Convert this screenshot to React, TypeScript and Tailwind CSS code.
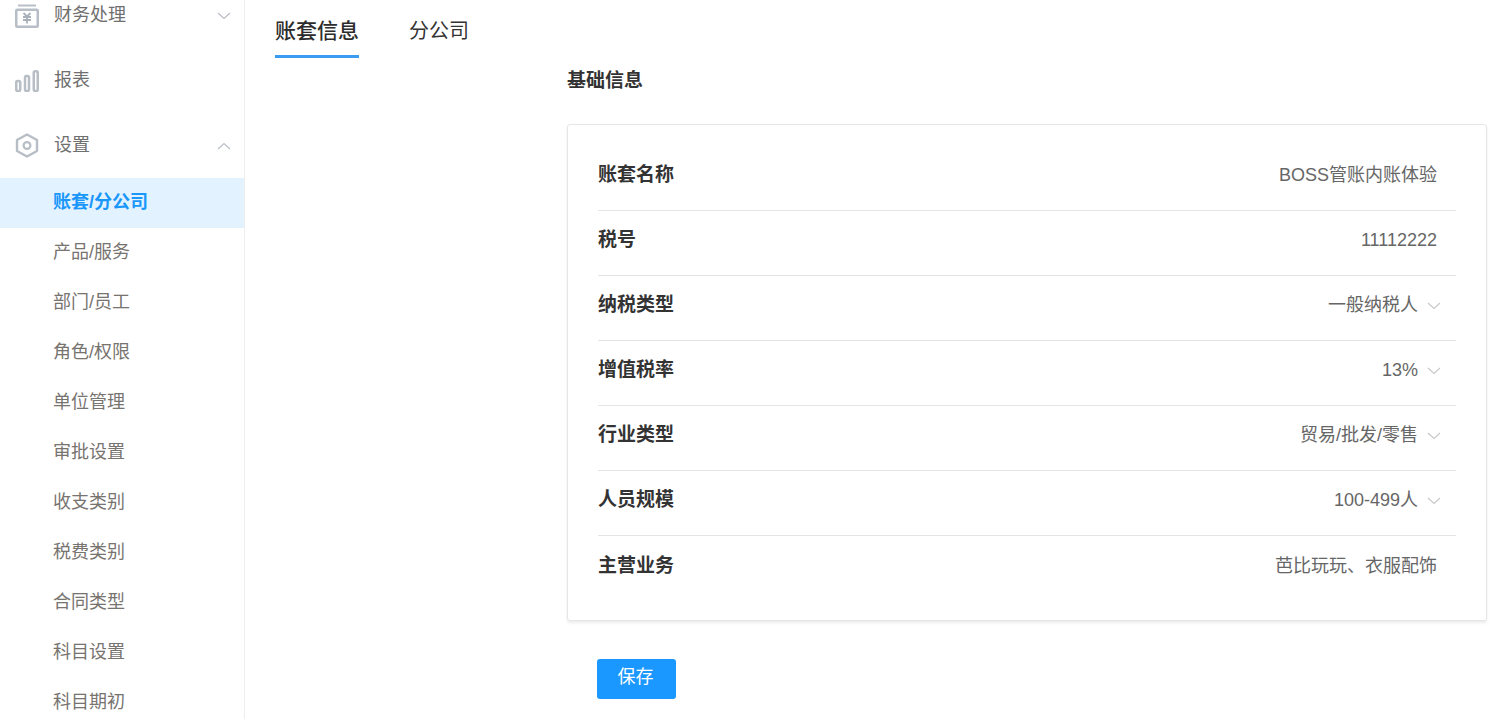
import React from "react";

const font = { fontFamily: '"Liberation Sans", "Noto Sans CJK SC", sans-serif' };

function Chevron({ up = false, className = "" }: { up?: boolean; className?: string }) {
  return (
    <svg width="14" height="8" viewBox="0 0 14 8" fill="none" className={className}>
      <path d={up ? "M1 7L7 1.5L13 7" : "M1 1L7 6.5L13 1"} stroke="currentColor" strokeWidth="1.2" />
    </svg>
  );
}

function FinanceIcon() {
  return (
    <svg width="24" height="24" viewBox="0 0 24 24" fill="none">
      <path d="M3 1.5H21" stroke="#b8bec6" strokeWidth="2" />
      <rect x="1.25" y="5.75" width="21.5" height="17" rx="1" stroke="#b8bec6" strokeWidth="2.5" />
      <path d="M8.5 9L12 12.5L15.5 9M8 13H16M8 16H16M12 12.5V19.5" stroke="#a9b0b9" strokeWidth="1.8" />
    </svg>
  );
}

function ChartIcon() {
  return (
    <svg width="24" height="22" viewBox="0 0 24 22" fill="none">
      <rect x="1.25" y="11" width="4" height="10" rx="1.5" stroke="#b8bec6" strokeWidth="2.5" />
      <rect x="10" y="6" width="4" height="15" rx="1.5" stroke="#b8bec6" strokeWidth="2.5" />
      <rect x="18.75" y="1.25" width="4" height="19.75" rx="1.5" stroke="#b8bec6" strokeWidth="2.5" />
    </svg>
  );
}

function GearIcon() {
  return (
    <svg width="24" height="25" viewBox="0 0 24 25" fill="none">
      <path d="M12 1.5L22 7V18L12 23.5L2 18V7Z" stroke="#b8bec6" strokeWidth="2.4" strokeLinejoin="round" />
      <circle cx="12" cy="12.5" r="3.4" stroke="#b8bec6" strokeWidth="2.2" />
    </svg>
  );
}

const subItems = ["产品/服务", "部门/员工", "角色/权限", "单位管理", "审批设置", "收支类别", "税费类别", "合同类型", "科目设置", "科目期初"];

const rows: { label: string; value: string; arrow?: boolean }[] = [
  { label: "账套名称", value: "BOSS管账内账体验" },
  { label: "税号", value: "11112222" },
  { label: "纳税类型", value: "一般纳税人", arrow: true },
  { label: "增值税率", value: "13%", arrow: true },
  { label: "行业类型", value: "贸易/批发/零售", arrow: true },
  { label: "人员规模", value: "100-499人", arrow: true },
  { label: "主营业务", value: "芭比玩玩、衣服配饰" },
];

function NavRow({ icon, label, chevron }: { icon: React.ReactNode; label: string; chevron?: "up" | "down" }) {
  return (
    <div className="flex h-[65px] items-center pl-[15px] pr-[13px] text-[18px] text-[#6f6f6f]">
      <div className="flex w-[24px] justify-center">{icon}</div>
      <span className="ml-[15px] flex-1">{label}</span>
      {chevron && <Chevron up={chevron === "up"} className="text-[#b9bec5]" />}
    </div>
  );
}

export default function App() {
  return (
    <div className="flex h-[719px] w-[1496px] overflow-hidden bg-white" style={font}>
      <aside className="w-[245px] shrink-0 border-r border-[#eeeeee]">
        <div className="-mt-[17px]">
          <NavRow icon={<FinanceIcon />} label="财务处理" chevron="down" />
          <NavRow icon={<ChartIcon />} label="报表" />
          <NavRow icon={<GearIcon />} label="设置" chevron="up" />
        </div>
        <div className="flex h-[50px] items-center bg-[#e3f2ff] pb-[2px] pl-[53px] text-[18px] font-bold text-[#1a97fb]">账套/分公司</div>
        {subItems.map((s) => (
          <div key={s} className="flex h-[50px] items-center pb-[2px] pl-[53px] text-[18px] text-[#77736f]">{s}</div>
        ))}
      </aside>
      <main className="flex-1">
        <div className="flex pl-[30px]">
          <div className="flex h-[58px] w-[84px] items-center justify-center border-b-[3px] border-[#3a9bf0] pt-[6px] text-[21px] font-medium text-[#2c2c2c] whitespace-nowrap">账套信息</div>
          <div className="ml-[50px] flex h-[58px] items-center pt-[4px] text-[20px] text-[#333333]">分公司</div>
        </div>
        <div className="ml-[322px] mr-[9px]">
          <h2 className="flex h-[44px] items-center pt-[2px] text-[19px] font-bold text-[#333333]">基础信息</h2>
          <div className="mt-[22px] rounded-[3px] border border-[#e6e6e6] px-[30px] pb-[19px] pt-[21px] shadow-[0_2px_3px_rgba(0,0,0,0.08)]">
            {rows.map((r, i) => (
              <div key={r.label} className={`flex h-[65px] items-center justify-between ${i < rows.length - 1 ? "border-b border-[#e4e4e4]" : ""}`}>
                <span className="pb-[5px] text-[19px] font-bold text-[#333333]">{r.label}</span>
                {r.arrow ? (
                  <span className="mr-[15px] flex items-center pb-[5px] text-[18px] text-[#666666]">
                    {r.value}
                    <Chevron className="ml-[9px] text-[#c9c9c9]" />
                  </span>
                ) : (
                  <span className="mr-[19px] pb-[5px] text-[18px] text-[#666666]">{r.value}</span>
                )}
              </div>
            ))}
          </div>
          <button className="ml-[30px] mt-[38px] flex h-[40px] w-[79px] items-center justify-center rounded-[3px] bg-[#1a98ff] pb-[4px] pr-[2px] text-[18px] text-white">保存</button>
        </div>
      </main>
    </div>
  );
}
